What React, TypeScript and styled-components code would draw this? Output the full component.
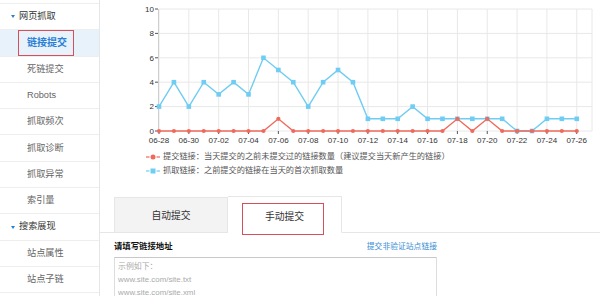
import styled, {createGlobalStyle} from "styled-components";

const GlobalStyle = createGlobalStyle`
  html, body {
    margin: 0;
    padding: 0;
    background: #ffffff;
    overflow: hidden;
  }
  body {
    font-family: "Liberation Sans", "Noto Sans CJK SC", sans-serif;
    color: #333333;
  }
`;

const BLUE = "#6fcdf3";
const RED = "#f0695b";

const Page = styled.div`
  display: flex;
  width: 600px;
  height: 296px;
  overflow: hidden;
`;

const Sidebar = styled.div`
  width: 100px;
  flex-shrink: 0;
  border-right: 1px solid #e6e6e6;
  padding-top: 3px;
  box-sizing: border-box;
`;

const SideRow = styled.div<{ $active?: boolean; $header?: boolean }>`
  display: flex;
  align-items: center;
  height: 26.3px;
  box-sizing: border-box;
  border-top: 1px solid #eeeeee;
  padding-left: ${props => props.$header ? "11px" : props.$active ? "18px" : "27px"};
  background: ${props => props.$active ? "#e7f2fb" : "#ffffff"};
  color: ${props => props.$active ? "#2a7fd4" : props.$header ? "#333333" : "#666666"};
  font-size: 9.2px;
  font-weight: ${props => props.$active ? "bold" : "normal"};
  line-height: 1;
`;

const ActiveLabel = styled.span`
  display: flex;
  align-items: center;
  height: 100%;
  box-sizing: border-box;
  padding: 0 6px 0 8px;
  border: 1px solid #d5505c;
  font-size: 10px;
`;

const Caret = styled.span`
  width: 0;
  height: 0;
  border-left: 2.5px solid transparent;
  border-right: 2.5px solid transparent;
  border-top: 3px solid #2a7fd4;
  margin-right: 4px;
`;

const Main = styled.div`
  flex: 1;
  min-width: 0;
  display: flex;
  flex-direction: column;
  overflow: hidden;

  & > * {
    flex-shrink: 0;
  }
`;

const ChartSvg = styled.svg`
  display: block;
  width: 500px;
  height: 148px;
`;

const Legend = styled.div`
  display: flex;
  flex-direction: column;
  padding-left: 46px;
  margin-top: 2px;
  font-size: 8.2px;
  color: #555555;
  line-height: 14px;
`;

const LegendRow = styled.div`
  display: flex;
  align-items: center;
  gap: 3px;
`;

const Tabs = styled.div`
  display: flex;
  margin-top: 19px;
  padding-left: 14px;
  border-bottom: 1px solid #e6e6e6;
  height: 35px;
`;

const Tab = styled.div<{ $active?: boolean }>`
  position: relative;
  width: 114px;
  box-sizing: border-box;
  display: flex;
  align-items: center;
  justify-content: center;
  font-size: 9.8px;
  color: #333333;
  background: ${props => props.$active ? "#ffffff" : "#f3f3f3"};
  border: 1px solid #e6e6e6;
  border-left: ${props => props.$active ? "none" : "1px solid #e6e6e6"};
  border-bottom: ${props => props.$active ? "1px solid #ffffff" : "1px solid #e6e6e6"};
  margin-bottom: -1px;
  height: ${props => props.$active ? "37px" : "36px"};
  margin-top: ${props => props.$active ? "-1px" : "0"};
  padding-top: ${props => props.$active ? "2px" : "0"};
`;

const Highlight = styled.span`
  position: absolute;
  left: 14px;
  right: 17px;
  top: 6px;
  bottom: -3px;
  border: 1px solid #d5505c;
`;

const Form = styled.div`
  width: 323px;
  margin-left: 14px;
  display: flex;
  flex-direction: column;
`;

const FormHead = styled.div`
  display: flex;
  justify-content: space-between;
  align-items: center;
  margin-top: 5px;
  height: 14px;
`;

const FieldLabel = styled.span`
  font-size: 8.4px;
  font-weight: bold;
  color: #111111;
`;

const FormLink = styled.a`
  font-size: 7.8px;
  color: #3a8fd5;
  text-decoration: none;
`;

const UrlInput = styled.textarea`
  margin-top: 5px;
  height: 80px;
  flex-shrink: 0;
  box-sizing: border-box;
  border: 1px solid #dddddd;
  border-top-color: #c8c8c8;
  padding: 2px 3px;
  resize: none;
  font-family: "Liberation Sans", "Noto Sans CJK SC", sans-serif;
  font-size: 7.9px;
  line-height: 13px;
  &::placeholder {
    color: #aaaaaa;
  }
`;

const submitted = [0, 0, 0, 0, 0, 0, 0, 0, 1, 0, 0, 0, 0, 0, 0, 0, 0, 0, 0, 0, 1, 0, 1, 0, 0, 0, 0, 0, 0];
const crawled = [2, 4, 2, 4, 3, 4, 3, 6, 5, 4, 2, 4, 5, 4, 1, 1, 1, 2, 1, 1, 1, 1, 1, 1, 0, 0, 1, 1, 1];

function dayLabel(i: number) {
    const d = new Date(2016, 5, 28 + i);
    const mm = String(d.getMonth() + 1).padStart(2, "0");
    const dd = String(d.getDate()).padStart(2, "0");
    return `${mm}-${dd}`;
}

const left = 59;
const right = 492;
const top = 9;
const bottom = 131;
const step = 14.92;
const px = (i: number) => left + i * step;
const py = (v: number) => bottom - v * 12.2;

function Chart() {
    const ticks = [0, 2, 4, 6, 8, 10];
    const labels = crawled.map((_, i) => i).filter(i => i % 2 === 0);
    const line = (data: number[]) => data.map((v, i) => `${px(i)},${py(v)}`).join(" ");

    return (
        <ChartSvg viewBox="0 0 500 148">
            {ticks.map(t => (
                <line key={"h" + t} x1={left} x2={right} y1={py(t)} y2={py(t)} stroke="#e8e8e8" strokeWidth={1}/>
            ))}
            {labels.map(i => (
                <line key={"v" + i} x1={px(i)} x2={px(i)} y1={top} y2={bottom} stroke="#e8e8e8" strokeWidth={1}/>
            ))}
            <line x1={right} x2={right} y1={top} y2={bottom} stroke="#e8e8e8"/>
            <line x1={left - 0.5} x2={left - 0.5} y1={top} y2={bottom + 1} stroke="#cfcfcf"/>
            {ticks.map(t => (
                <g key={"t" + t}>
                    <line x1={left - 4} x2={left - 1} y1={py(t)} y2={py(t)} stroke="#555"/>
                    <text x={left - 5} y={py(t) + 2.8} textAnchor="end" fontSize="8" fill="#333"
                          fontFamily="Liberation Sans, sans-serif">{t}</text>
                </g>
            ))}
            {labels.map(i => (
                <g key={"x" + i}>
                    <line x1={px(i)} x2={px(i)} y1={bottom} y2={bottom + 3} stroke="#555"/>
                    <text x={px(i)} y={bottom + 12} textAnchor="middle" fontSize="8" fill="#333"
                          fontFamily="Liberation Sans, sans-serif">{dayLabel(i)}</text>
                </g>
            ))}
            <polyline points={line(crawled)} fill="none" stroke={BLUE} strokeWidth={1.4}/>
            {crawled.map((v, i) => (
                <rect key={"b" + i} x={px(i) - 2.3} y={py(v) - 2.3} width={4.6} height={4.6} fill={BLUE}/>
            ))}
            <polyline points={line(submitted)} fill="none" stroke={RED} strokeWidth={1.4}/>
            {submitted.map((v, i) => (
                <circle key={"r" + i} cx={px(i)} cy={py(v)} r={2.1} fill={RED}/>
            ))}
        </ChartSvg>
    );
}

function LegendMark({color, square}: { color: string; square?: boolean }) {
    return (
        <svg width="14" height="8" viewBox="0 0 14 8">
            <line x1="0" x2="3.5" y1="4" y2="4" stroke={color} strokeWidth="1.2"/>
            <line x1="10.5" x2="14" y1="4" y2="4" stroke={color} strokeWidth="1.2"/>
            {square ? <rect x="4.5" y="1.5" width="5" height="5" fill={color}/> :
                <circle cx="7" cy="4" r="2.5" fill={color}/>}
        </svg>
    );
}

const menu = [
    {label: "网页抓取", header: true},
    {label: "链接提交", active: true},
    {label: "死链提交"},
    {label: "Robots"},
    {label: "抓取频次"},
    {label: "抓取诊断"},
    {label: "抓取异常"},
    {label: "索引量"},
    {label: "搜索展现", header: true},
    {label: "站点属性"},
    {label: "站点子链"},
];

export default function App() {
    return (
        <>
            <GlobalStyle/>
            <Page>
                <Sidebar>
                    {menu.map(item => (
                        <SideRow key={item.label} $active={item.active} $header={item.header}>
                            {item.header && <Caret/>}
                            {item.active ? <ActiveLabel>{item.label}</ActiveLabel> : item.label}
                        </SideRow>
                    ))}
                    <SideRow/>
                </Sidebar>
                <Main>
                    <Chart/>
                    <Legend>
                        <LegendRow>
                            <LegendMark color={RED}/>
                            提交链接：当天提交的之前未提交过的链接数量（建议提交当天新产生的链接）
                        </LegendRow>
                        <LegendRow>
                            <LegendMark color={BLUE} square/>
                            抓取链接：之前提交的链接在当天的首次抓取数量
                        </LegendRow>
                    </Legend>
                    <Tabs>
                        <Tab>自动提交</Tab>
                        <Tab $active>
                            手动提交
                            <Highlight/>
                        </Tab>
                    </Tabs>
                    <Form>
                        <FormHead>
                            <FieldLabel>请填写链接地址</FieldLabel>
                            <FormLink href="#">提交非验证站点链接</FormLink>
                        </FormHead>
                        <UrlInput placeholder={"示例如下：\nwww.site.com/site.txt\nwww.site.com/site.xml"}/>
                    </Form>
                </Main>
            </Page>
        </>
    );
}
